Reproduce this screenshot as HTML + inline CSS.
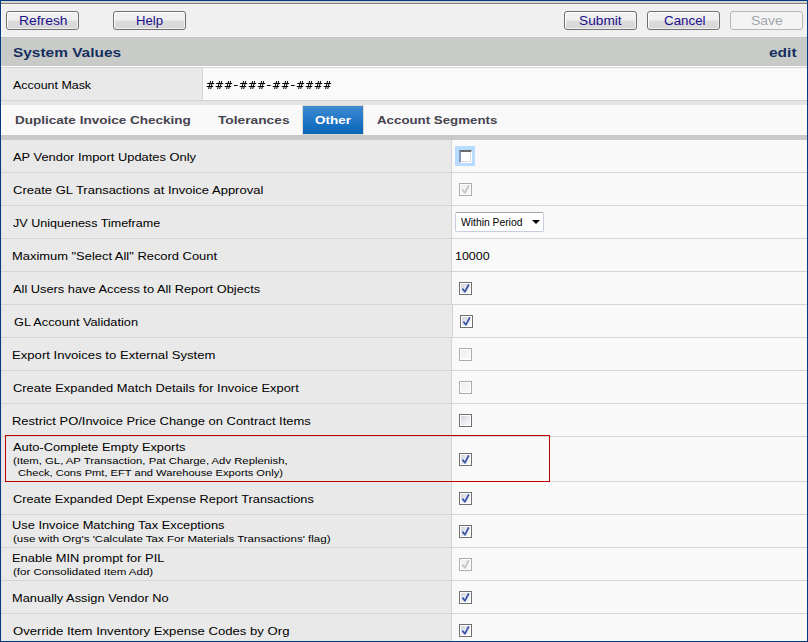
<!DOCTYPE html><html><head><meta charset="utf-8"><style>
html,body{margin:0;padding:0;width:808px;height:642px;overflow:hidden;background:#f0f0f0}
.r,.t,.btn,.cb,.cbd,.cbf,.sel{position:absolute}
.t{font-family:"Liberation Sans", sans-serif;white-space:pre;line-height:normal;transform-origin:0 0}
.btn{box-sizing:border-box;border:1px solid #707070;border-radius:3px;background:linear-gradient(#f2f2f2 0,#f0f0f0 45%,#dcdcdc 55%,#d6d6d6 100%);box-shadow:inset 1px 1px 0 #fff,inset -1px -1px 0 #f0f0f0}
.btn.dis{border-color:#b4b8bc;background:#f4f4f4;box-shadow:none}
.cb,.cbd,.cbf{width:13px;height:13px;box-sizing:border-box}
.cb{border:1px solid #707070;background:linear-gradient(135deg,#c9cdd8 0%,#e6e8ec 45%,#f8f8f8 85%);box-shadow:inset 0 0 0 1px #fff}
.cb svg,.cbd svg{position:absolute;left:-1px;top:-1px}
.cbd{border:1px solid #acacac;background:linear-gradient(135deg,#ececec,#fafafa);box-shadow:inset 0 0 0 1px #fff}
.cbf{background:#fff;border-top:2px solid #6a6a6a;border-left:2px solid #8a98c0;border-right:1px solid #fff;border-bottom:1px solid #fff;box-shadow:inset -1px -1px 0 #dcdcdc}
.sel{box-sizing:border-box;border:1px solid #c8cfdc;border-top-color:#a4a4a4;border-radius:2px;background:#fff}
</style></head><body><div class="r" style="left:0px;top:0px;width:808px;height:642px;background:#f0f0f0;"></div>
<div class="r" style="left:1px;top:1px;width:806px;height:2px;background:#d6d3ce;"></div>
<div class="r" style="left:1px;top:3px;width:806px;height:1px;background:#808080;"></div>
<div class="r" style="left:1px;top:4px;width:806px;height:1px;background:#f8f8f8;"></div>
<div class="r" style="left:1px;top:4px;width:1px;height:637px;background:#e6e3de;"></div>
<div class="r" style="left:806px;top:4px;width:1px;height:637px;background:#f6f4f0;"></div>
<div class="r" style="left:1px;top:640px;width:718px;height:1px;background:#f0ece4;"></div>
<div class="r" style="left:719px;top:640px;width:88px;height:1px;background:linear-gradient(90deg,#4a7fd4,#3a6cc0);"></div>
<div class="btn" style="left:6px;top:11px;width:73px;height:19px"></div>
<div class="t" style="left:19.33px;top:13px;font-size:13px;color:#1c0f8c;font-weight:normal;transform:scaleX(1.0659);">Refresh</div>
<div class="btn" style="left:113px;top:11px;width:73px;height:19px"></div>
<div class="t" style="left:136.09px;top:13px;font-size:13px;color:#1c0f8c;font-weight:normal;transform:scaleX(1.0077);">Help</div>
<div class="btn" style="left:564px;top:11px;width:73px;height:19px"></div>
<div class="t" style="left:578.95px;top:13px;font-size:13px;color:#1c0f8c;font-weight:normal;transform:scaleX(1.0550);">Submit</div>
<div class="btn" style="left:647px;top:11px;width:73px;height:19px"></div>
<div class="t" style="left:664.10px;top:13px;font-size:13px;color:#1c0f8c;font-weight:normal;transform:scaleX(1.0275);">Cancel</div>
<div class="btn dis" style="left:730px;top:11px;width:73px;height:19px"></div>
<div class="t" style="left:751.12px;top:13px;font-size:13px;color:#a2a6ae;font-weight:normal;transform:scaleX(1.0750);">Save</div>
<div class="r" style="left:1px;top:37px;width:806px;height:29px;background:#c9cbc9;"></div>
<div class="r" style="left:1px;top:37px;width:806px;height:1px;background:#c3c5c3;"></div>
<div class="r" style="left:1px;top:65px;width:806px;height:1px;background:#c5c6c5;"></div>
<div class="t" style="left:13.00px;top:45px;font-size:13px;color:#15305e;font-weight:bold;transform:scaleX(1.1868);">System Values</div>
<div class="t" style="left:768.60px;top:45px;font-size:13px;color:#15305e;font-weight:bold;transform:scaleX(1.1913);">edit</div>
<div class="r" style="left:1px;top:66px;width:806px;height:1px;background:#ffffff;"></div>
<div class="r" style="left:1px;top:67px;width:806px;height:1px;background:#d4d4d4;"></div>
<div class="r" style="left:2px;top:68px;width:200px;height:32px;background:#e9e9e9;"></div>
<div class="r" style="left:202px;top:68px;width:1px;height:32px;background:#d4d4d4;"></div>
<div class="r" style="left:203px;top:68px;width:604px;height:32px;background:#fafafa;"></div>
<div class="r" style="left:1px;top:100px;width:806px;height:1px;background:#d2d2d2;"></div>
<div class="t" style="left:13.00px;top:79px;font-size:11px;color:#000;font-weight:normal;transform:scaleX(1.1304);">Account Mask</div>
<svg class="r" style="left:206px;top:80px" width="130" height="10" viewBox="0 0 130 10"><path d="M1.2 3.5H8.2M0.7 6.5H7.2M4.6 1L2.6 9M6.7 1L4.7 9M10.2 3.5H17.2M9.7 6.5H16.2M13.6 1L11.6 9M15.7 1L13.7 9M19.2 3.5H26.2M18.7 6.5H25.2M22.6 1L20.6 9M24.7 1L22.7 9M28 5.5H31.6M34.2 3.5H41.2M33.7 6.5H40.2M37.6 1L35.6 9M39.7 1L37.7 9M43.2 3.5H50.2M42.7 6.5H49.2M46.6 1L44.6 9M48.7 1L46.7 9M52.2 3.5H59.2M51.7 6.5H58.2M55.6 1L53.6 9M57.7 1L55.7 9M61 5.5H64.6M67.2 3.5H74.2M66.7 6.5H73.2M70.6 1L68.6 9M72.7 1L70.7 9M76.2 3.5H83.2M75.7 6.5H82.2M79.6 1L77.6 9M81.7 1L79.7 9M85 5.5H88.6M91.2 3.5H98.2M90.7 6.5H97.2M94.6 1L92.6 9M96.7 1L94.7 9M100.2 3.5H107.2M99.7 6.5H106.2M103.6 1L101.6 9M105.7 1L103.7 9M109.2 3.5H116.2M108.7 6.5H115.2M112.6 1L110.6 9M114.7 1L112.7 9M118.2 3.5H125.2M117.7 6.5H124.2M121.6 1L119.6 9M123.7 1L121.7 9" stroke="#000" stroke-width="1" fill="none"/></svg>
<div class="r" style="left:1px;top:101px;width:806px;height:4px;background:#e4e5e4;"></div>
<div class="r" style="left:2px;top:105px;width:805px;height:30px;background:#f9f9f9;"></div>
<div class="r" style="left:302px;top:105px;width:62px;height:30px;background:linear-gradient(#3f8ad2,#0565b8);border:1px solid #ddd8d0;box-sizing:border-box"></div>
<div class="t" style="left:14.80px;top:114px;font-size:11px;color:#47434f;font-weight:bold;transform:scaleX(1.2294);">Duplicate Invoice Checking</div>
<div class="t" style="left:217.80px;top:114px;font-size:11px;color:#47434f;font-weight:bold;transform:scaleX(1.2491);">Tolerances</div>
<div class="t" style="left:314.90px;top:114px;font-size:11px;color:#ffffff;font-weight:bold;transform:scaleX(1.2276);">Other</div>
<div class="t" style="left:377.40px;top:114px;font-size:11px;color:#47434f;font-weight:bold;transform:scaleX(1.2081);">Account Segments</div>
<div class="r" style="left:1px;top:135px;width:806px;height:5px;background:#c8c9c8;"></div>
<div class="r" style="left:1px;top:105px;width:1px;height:30px;background:#ffffff;"></div>
<div class="r" style="left:1px;top:4px;width:1px;height:33px;background:#fbfbfb;"></div>
<div class="r" style="left:2px;top:140px;width:449px;height:32px;background:#e9e9e9;"></div>
<div class="r" style="left:451px;top:140px;width:1px;height:32px;background:#d4d4d4;"></div>
<div class="r" style="left:452px;top:140px;width:355px;height:32px;background:#f9f9f9;"></div>
<div class="r" style="left:1px;top:172px;width:806px;height:1px;background:#d4d4d4;"></div>
<div class="t" style="left:13.20px;top:151px;font-size:11px;color:#000;font-weight:normal;transform:scaleX(1.1705);">AP Vendor Import Updates Only</div>
<div class="r" style="left:455px;top:146px;width:20px;height:20px;background:#b8dcff;"></div>
<div class="cbf" style="left:459px;top:150px"></div>
<div class="r" style="left:2px;top:173px;width:449px;height:32px;background:#e9e9e9;"></div>
<div class="r" style="left:451px;top:173px;width:1px;height:32px;background:#d4d4d4;"></div>
<div class="r" style="left:452px;top:173px;width:355px;height:32px;background:#f9f9f9;"></div>
<div class="r" style="left:1px;top:205px;width:806px;height:1px;background:#d4d4d4;"></div>
<div class="t" style="left:13.20px;top:184px;font-size:11px;color:#000;font-weight:normal;transform:scaleX(1.1820);">Create GL Transactions at Invoice Approval</div>
<div class="cbd" style="left:459px;top:183px"><svg width="13" height="13" viewBox="0 0 13 13"><path d="M3.8 7.1 L5.9 9.8 L9.5 3" fill="none" stroke="#c4c4c4" stroke-width="1.75" stroke-linecap="round" stroke-linejoin="round"/></svg></div>
<div class="r" style="left:2px;top:206px;width:449px;height:32px;background:#e9e9e9;"></div>
<div class="r" style="left:451px;top:206px;width:1px;height:32px;background:#d4d4d4;"></div>
<div class="r" style="left:452px;top:206px;width:355px;height:32px;background:#f9f9f9;"></div>
<div class="r" style="left:1px;top:238px;width:806px;height:1px;background:#d4d4d4;"></div>
<div class="t" style="left:13.20px;top:217px;font-size:11px;color:#000;font-weight:normal;transform:scaleX(1.1411);">JV Uniqueness Timeframe</div>
<div class="sel" style="left:455px;top:212px;width:89px;height:20px"></div>
<div class="t" style="left:460.50px;top:216px;font-size:11px;color:#000;font-weight:normal;transform:scaleX(0.9385);">Within Period</div>
<div class="r" style="left:532px;top:220px;width:0;height:0;border-left:4px solid transparent;border-right:4px solid transparent;border-top:4.5px solid #000"></div>
<div class="r" style="left:2px;top:239px;width:449px;height:32px;background:#e9e9e9;"></div>
<div class="r" style="left:451px;top:239px;width:1px;height:32px;background:#d4d4d4;"></div>
<div class="r" style="left:452px;top:239px;width:355px;height:32px;background:#f9f9f9;"></div>
<div class="r" style="left:1px;top:271px;width:806px;height:1px;background:#d4d4d4;"></div>
<div class="t" style="left:11.83px;top:250px;font-size:11px;color:#000;font-weight:normal;transform:scaleX(1.1736);">Maximum "Select All" Record Count</div>
<div class="t" style="left:454.57px;top:250px;font-size:11px;color:#000;font-weight:normal;transform:scaleX(1.1300);">10000</div>
<div class="r" style="left:2px;top:272px;width:449px;height:32px;background:#e9e9e9;"></div>
<div class="r" style="left:451px;top:272px;width:1px;height:32px;background:#d4d4d4;"></div>
<div class="r" style="left:452px;top:272px;width:355px;height:32px;background:#f9f9f9;"></div>
<div class="r" style="left:1px;top:304px;width:806px;height:1px;background:#d4d4d4;"></div>
<div class="t" style="left:13.00px;top:283px;font-size:11px;color:#000;font-weight:normal;transform:scaleX(1.1651);">All Users have Access to All Report Objects</div>
<div class="cb" style="left:459px;top:282px"><svg width="13" height="13" viewBox="0 0 13 13"><path d="M3.8 7.1 L5.9 9.8 L9.5 3" fill="none" stroke="#3a54a6" stroke-width="1.75" stroke-linecap="round" stroke-linejoin="round"/></svg></div>
<div class="r" style="left:2px;top:305px;width:450px;height:32px;background:#e9e9e9;"></div>
<div class="r" style="left:452px;top:305px;width:1px;height:32px;background:#d4d4d4;"></div>
<div class="r" style="left:453px;top:305px;width:354px;height:32px;background:#f9f9f9;"></div>
<div class="r" style="left:1px;top:337px;width:806px;height:1px;background:#d4d4d4;"></div>
<div class="t" style="left:14.10px;top:316px;font-size:11px;color:#000;font-weight:normal;transform:scaleX(1.1589);">GL Account Validation</div>
<div class="cb" style="left:460px;top:315px"><svg width="13" height="13" viewBox="0 0 13 13"><path d="M3.8 7.1 L5.9 9.8 L9.5 3" fill="none" stroke="#3a54a6" stroke-width="1.75" stroke-linecap="round" stroke-linejoin="round"/></svg></div>
<div class="r" style="left:2px;top:338px;width:449px;height:32px;background:#e9e9e9;"></div>
<div class="r" style="left:451px;top:338px;width:1px;height:32px;background:#d4d4d4;"></div>
<div class="r" style="left:452px;top:338px;width:355px;height:32px;background:#f9f9f9;"></div>
<div class="r" style="left:1px;top:370px;width:806px;height:1px;background:#d4d4d4;"></div>
<div class="t" style="left:11.81px;top:349px;font-size:11px;color:#000;font-weight:normal;transform:scaleX(1.1929);">Export Invoices to External System</div>
<div class="cbd" style="left:459px;top:348px"></div>
<div class="r" style="left:2px;top:371px;width:449px;height:32px;background:#e9e9e9;"></div>
<div class="r" style="left:451px;top:371px;width:1px;height:32px;background:#d4d4d4;"></div>
<div class="r" style="left:452px;top:371px;width:355px;height:32px;background:#f9f9f9;"></div>
<div class="r" style="left:1px;top:403px;width:806px;height:1px;background:#d4d4d4;"></div>
<div class="t" style="left:13.00px;top:382px;font-size:11px;color:#000;font-weight:normal;transform:scaleX(1.1713);">Create Expanded Match Details for Invoice Export</div>
<div class="cbd" style="left:459px;top:381px"></div>
<div class="r" style="left:2px;top:404px;width:449px;height:32px;background:#e9e9e9;"></div>
<div class="r" style="left:451px;top:404px;width:1px;height:32px;background:#d4d4d4;"></div>
<div class="r" style="left:452px;top:404px;width:355px;height:32px;background:#f9f9f9;"></div>
<div class="r" style="left:1px;top:436px;width:806px;height:1px;background:#d4d4d4;"></div>
<div class="t" style="left:11.82px;top:415px;font-size:11px;color:#000;font-weight:normal;transform:scaleX(1.1775);">Restrict PO/Invoice Price Change on Contract Items</div>
<div class="cb" style="left:459px;top:414px"></div>
<div class="r" style="left:2px;top:437px;width:449px;height:44px;background:#e9e9e9;"></div>
<div class="r" style="left:451px;top:437px;width:1px;height:44px;background:#d4d4d4;"></div>
<div class="r" style="left:452px;top:437px;width:355px;height:44px;background:#f9f9f9;"></div>
<div class="r" style="left:1px;top:481px;width:806px;height:1px;background:#d4d4d4;"></div>
<div class="t" style="left:13.20px;top:441px;font-size:11px;color:#000;font-weight:normal;transform:scaleX(1.1649);">Auto-Complete Empty Exports</div>
<div class="t" style="left:13.20px;top:456px;font-size:9px;color:#000;font-weight:normal;transform:scaleX(1.2573);">(Item, GL, AP Transaction, Pat Charge, Adv Replenish,</div>
<div class="t" style="left:17.60px;top:468px;font-size:9px;color:#000;font-weight:normal;transform:scaleX(1.2346);">Check, Cons Pmt, EFT and Warehouse Exports Only)</div>
<div class="cb" style="left:459px;top:453px"><svg width="13" height="13" viewBox="0 0 13 13"><path d="M3.8 7.1 L5.9 9.8 L9.5 3" fill="none" stroke="#3a54a6" stroke-width="1.75" stroke-linecap="round" stroke-linejoin="round"/></svg></div>
<div class="r" style="left:2px;top:482px;width:449px;height:32px;background:#e9e9e9;"></div>
<div class="r" style="left:451px;top:482px;width:1px;height:32px;background:#d4d4d4;"></div>
<div class="r" style="left:452px;top:482px;width:355px;height:32px;background:#f9f9f9;"></div>
<div class="r" style="left:1px;top:514px;width:806px;height:1px;background:#d4d4d4;"></div>
<div class="t" style="left:13.00px;top:493px;font-size:11px;color:#000;font-weight:normal;transform:scaleX(1.1602);">Create Expanded Dept Expense Report Transactions</div>
<div class="cb" style="left:459px;top:492px"><svg width="13" height="13" viewBox="0 0 13 13"><path d="M3.8 7.1 L5.9 9.8 L9.5 3" fill="none" stroke="#3a54a6" stroke-width="1.75" stroke-linecap="round" stroke-linejoin="round"/></svg></div>
<div class="r" style="left:2px;top:515px;width:449px;height:32px;background:#e9e9e9;"></div>
<div class="r" style="left:451px;top:515px;width:1px;height:32px;background:#d4d4d4;"></div>
<div class="r" style="left:452px;top:515px;width:355px;height:32px;background:#f9f9f9;"></div>
<div class="r" style="left:1px;top:547px;width:806px;height:1px;background:#d4d4d4;"></div>
<div class="t" style="left:11.83px;top:519px;font-size:11px;color:#000;font-weight:normal;transform:scaleX(1.1674);">Use Invoice Matching Tax Exceptions</div>
<div class="t" style="left:13.00px;top:534px;font-size:9px;color:#000;font-weight:normal;transform:scaleX(1.2798);">(use with Org's 'Calculate Tax For Materials Transactions' flag)</div>
<div class="cb" style="left:459px;top:525px"><svg width="13" height="13" viewBox="0 0 13 13"><path d="M3.8 7.1 L5.9 9.8 L9.5 3" fill="none" stroke="#3a54a6" stroke-width="1.75" stroke-linecap="round" stroke-linejoin="round"/></svg></div>
<div class="r" style="left:2px;top:548px;width:449px;height:32px;background:#e9e9e9;"></div>
<div class="r" style="left:451px;top:548px;width:1px;height:32px;background:#d4d4d4;"></div>
<div class="r" style="left:452px;top:548px;width:355px;height:32px;background:#f9f9f9;"></div>
<div class="r" style="left:1px;top:580px;width:806px;height:1px;background:#d4d4d4;"></div>
<div class="t" style="left:11.83px;top:552px;font-size:11px;color:#000;font-weight:normal;transform:scaleX(1.1705);">Enable MIN prompt for PIL</div>
<div class="t" style="left:13.00px;top:567px;font-size:9px;color:#000;font-weight:normal;transform:scaleX(1.2789);">(for Consolidated Item Add)</div>
<div class="cbd" style="left:459px;top:558px"><svg width="13" height="13" viewBox="0 0 13 13"><path d="M3.8 7.1 L5.9 9.8 L9.5 3" fill="none" stroke="#c4c4c4" stroke-width="1.75" stroke-linecap="round" stroke-linejoin="round"/></svg></div>
<div class="r" style="left:2px;top:581px;width:449px;height:32px;background:#e9e9e9;"></div>
<div class="r" style="left:451px;top:581px;width:1px;height:32px;background:#d4d4d4;"></div>
<div class="r" style="left:452px;top:581px;width:355px;height:32px;background:#f9f9f9;"></div>
<div class="r" style="left:1px;top:613px;width:806px;height:1px;background:#d4d4d4;"></div>
<div class="t" style="left:12.24px;top:592px;font-size:11px;color:#000;font-weight:normal;transform:scaleX(1.1647);">Manually Assign Vendor No</div>
<div class="cb" style="left:459px;top:591px"><svg width="13" height="13" viewBox="0 0 13 13"><path d="M3.8 7.1 L5.9 9.8 L9.5 3" fill="none" stroke="#3a54a6" stroke-width="1.75" stroke-linecap="round" stroke-linejoin="round"/></svg></div>
<div class="r" style="left:2px;top:614px;width:449px;height:32px;background:#e9e9e9;"></div>
<div class="r" style="left:451px;top:614px;width:1px;height:32px;background:#d4d4d4;"></div>
<div class="r" style="left:452px;top:614px;width:355px;height:32px;background:#f9f9f9;"></div>
<div class="r" style="left:1px;top:646px;width:806px;height:1px;background:#d4d4d4;"></div>
<div class="t" style="left:13.00px;top:625px;font-size:11px;color:#000;font-weight:normal;transform:scaleX(1.1931);">Override Item Inventory Expense Codes by Org</div>
<div class="cb" style="left:459px;top:624px"><svg width="13" height="13" viewBox="0 0 13 13"><path d="M3.8 7.1 L5.9 9.8 L9.5 3" fill="none" stroke="#3a54a6" stroke-width="1.75" stroke-linecap="round" stroke-linejoin="round"/></svg></div>
<div class="r" style="left:5px;top:435px;width:545px;height:47px;border:1px solid #c00000;box-sizing:border-box"></div>
<div class="r" style="left:0px;top:0px;width:808px;height:1px;background:#003c84;"></div>
<div class="r" style="left:0px;top:0px;width:1px;height:642px;background:#003c84;"></div>
<div class="r" style="left:807px;top:0px;width:1px;height:642px;background:#003c84;"></div>
<div class="r" style="left:0px;top:641px;width:808px;height:1px;background:#003c84;"></div></body></html>
